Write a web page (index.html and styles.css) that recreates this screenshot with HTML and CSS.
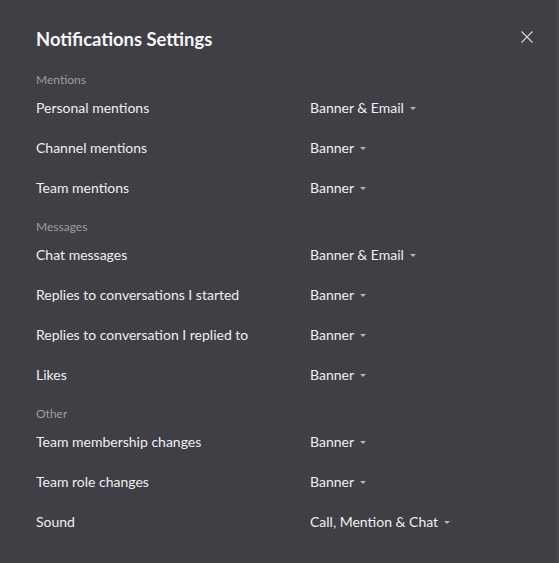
FILE: index.html
```html
<!DOCTYPE html>
<html lang="en">
<head>
<meta charset="utf-8">
<title>Notifications Settings</title>
<link rel="stylesheet" href="styles.css">
</head>
<body>
<div class="dialog">
  <div class="header">
    <h1 class="title">Notifications Settings</h1>
    <button class="close" aria-label="Close">
      <svg width="12" height="12" viewBox="0 0 12 12"><path d="M0.5 0.5 L11.5 11.5 M11.5 0.5 L0.5 11.5" stroke="#d6d6d8" stroke-width="1.1" fill="none"/></svg>
    </button>
  </div>

  <section class="group">
    <div class="group-title">Mentions</div>
    <div class="row"><span class="label">Personal mentions</span><span class="value">Banner &amp; Email<i class="caret"></i></span></div>
    <div class="row"><span class="label">Channel mentions</span><span class="value">Banner<i class="caret"></i></span></div>
    <div class="row"><span class="label">Team mentions</span><span class="value">Banner<i class="caret"></i></span></div>
  </section>

  <section class="group">
    <div class="group-title">Messages</div>
    <div class="row"><span class="label">Chat messages</span><span class="value">Banner &amp; Email<i class="caret"></i></span></div>
    <div class="row"><span class="label">Replies to conversations I started</span><span class="value">Banner<i class="caret"></i></span></div>
    <div class="row"><span class="label">Replies to conversation I replied to</span><span class="value">Banner<i class="caret"></i></span></div>
    <div class="row"><span class="label">Likes</span><span class="value">Banner<i class="caret"></i></span></div>
  </section>

  <section class="group">
    <div class="group-title">Other</div>
    <div class="row"><span class="label">Team membership changes</span><span class="value">Banner<i class="caret"></i></span></div>
    <div class="row"><span class="label">Team role changes</span><span class="value">Banner<i class="caret"></i></span></div>
    <div class="row"><span class="label">Sound</span><span class="value">Call, Mention &amp; Chat<i class="caret"></i></span></div>
  </section>
</div>
</body>
</html>
```

FILE: styles.css
```css
html, body {
  margin: 0;
  padding: 0;
  height: 100%;
  background: #403f46;
}

body {
  font-family: Lato, "Open Sans", "DejaVu Sans", sans-serif;
  color: #efeff0;
}

.dialog {
  padding: 27px 0 0 36px;
  box-sizing: border-box;
  height: 563px;
  border-right: 2px solid #4a4950;
}

.header {
  display: flex;
  align-items: flex-start;
  justify-content: space-between;
  padding-right: 24px;
  height: 43px;
}

.title {
  margin: 0;
  font-size: 18.4px;
  font-weight: 700;
  line-height: 24px;
  color: #f6f6f7;
}

.close {
  background: none;
  border: 0;
  padding: 0;
  margin-top: 4px;
  width: 12px;
  height: 12px;
  display: flex;
  cursor: pointer;
}

.group + .group {
  margin-top: 9px;
}

.group-title {
  height: 18px;
  padding-top: 1px;
  box-sizing: border-box;
  line-height: 18px;
  font-size: 12px;
  color: #9e9da3;
}

.row {
  display: grid;
  grid-template-columns: 274px auto;
  height: 40px;
  padding-bottom: 2px;
  box-sizing: border-box;
  align-items: center;
  font-size: 14px;
}

.value {
  display: flex;
  align-items: center;
}

.caret {
  display: inline-block;
  width: 0;
  height: 0;
  margin-left: 6px;
  margin-top: 3px;
  border-left: 3px solid transparent;
  border-right: 3px solid transparent;
  border-top: 3px solid #b5b4b9;
}
```
